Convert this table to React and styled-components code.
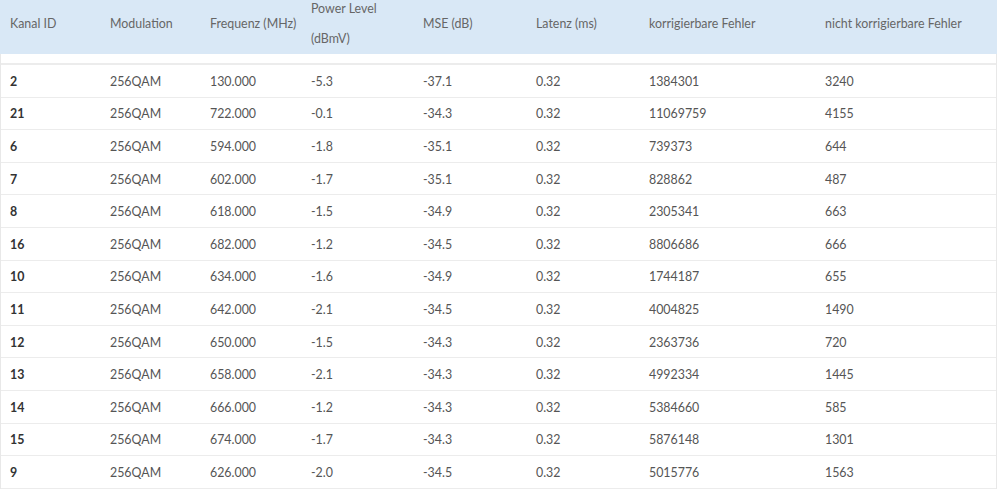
import React from "react";
import styled, { createGlobalStyle } from "styled-components";

const GlobalStyle = createGlobalStyle`
  html, body {
    margin: 0;
    padding: 0;
    background: #fff;
  }
  body {
    font-family: Lato, "Open Sans", sans-serif;
  }
`;

const columns = "100px 100px 101px 112px 113px 113px 176px 1fr";

const headers = [
  "Kanal ID",
  "Modulation",
  "Frequenz (MHz)",
  ["Power Level", "(dBmV)"],
  "MSE (dB)",
  "Latenz (ms)",
  "korrigierbare Fehler",
  "nicht korrigierbare Fehler",
];

const rows = [
  ["2", "256QAM", "130.000", "-5.3", "-37.1", "0.32", "1384301", "3240"],
  ["21", "256QAM", "722.000", "-0.1", "-34.3", "0.32", "11069759", "4155"],
  ["6", "256QAM", "594.000", "-1.8", "-35.1", "0.32", "739373", "644"],
  ["7", "256QAM", "602.000", "-1.7", "-35.1", "0.32", "828862", "487"],
  ["8", "256QAM", "618.000", "-1.5", "-34.9", "0.32", "2305341", "663"],
  ["16", "256QAM", "682.000", "-1.2", "-34.5", "0.32", "8806686", "666"],
  ["10", "256QAM", "634.000", "-1.6", "-34.9", "0.32", "1744187", "655"],
  ["11", "256QAM", "642.000", "-2.1", "-34.5", "0.32", "4004825", "1490"],
  ["12", "256QAM", "650.000", "-1.5", "-34.3", "0.32", "2363736", "720"],
  ["13", "256QAM", "658.000", "-2.1", "-34.3", "0.32", "4992334", "1445"],
  ["14", "256QAM", "666.000", "-1.2", "-34.3", "0.32", "5384660", "585"],
  ["15", "256QAM", "674.000", "-1.7", "-34.3", "0.32", "5876148", "1301"],
  ["9", "256QAM", "626.000", "-2.0", "-34.5", "0.32", "5015776", "1563"],
];

const Table = styled.div`
  width: 997px;
`;

const HeadRow = styled.div`
  display: grid;
  grid-template-columns: ${columns};
  grid-template-rows: 48px;
  height: 54px;
  padding-left: 1px;
  padding-bottom: 6px;
  box-sizing: border-box;
  background: #d9e8f6;
`;

const HeadCell = styled.div`
  display: flex;
  flex-direction: column;
  justify-content: center;
  min-height: 0;
  padding-left: 9px;
  font-size: 12.4px;
  line-height: 30px;
  color: #666;
  white-space: nowrap;
`;

const Body = styled.div`
  border-left: 1px solid #e8e8e8;
  border-right: 1px solid #e8e8e8;
`;

const Spacer = styled.div`
  height: 9px;
  border-bottom: 2px solid #ececec;
`;

const Row = styled.div`
  display: grid;
  grid-template-columns: ${columns};
  height: 32.6px;
  padding-top: 1px;
  box-sizing: border-box;
  border-bottom: 1px solid #ececec;
  align-items: center;
`;

const Cell = styled.div`
  padding-left: 9px;
  font-size: 12.4px;
  color: ${(p) => (p.$strong ? "#333" : "#555")};
  font-weight: ${(p) => (p.$strong ? 700 : 400)};
  white-space: nowrap;
`;

export default function App() {
  return (
    <>
      <GlobalStyle />
      <Table>
        <HeadRow>
          {headers.map((h, i) => (
            <HeadCell key={i}>
              {Array.isArray(h) ? h.map((line) => <span key={line}>{line}</span>) : h}
            </HeadCell>
          ))}
        </HeadRow>
        <Body>
          <Spacer />
          {rows.map((r, i) => (
            <Row key={i}>
              {r.map((v, j) => (
                <Cell key={j} $strong={j === 0}>
                  {v}
                </Cell>
              ))}
            </Row>
          ))}
        </Body>
      </Table>
    </>
  );
}
